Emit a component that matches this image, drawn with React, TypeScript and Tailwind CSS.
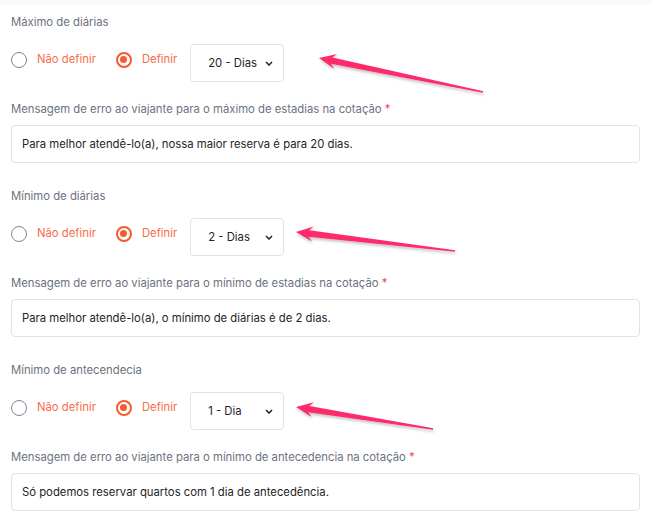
const sections = [
  {
    title: "Máximo de diárias",
    value: "20 - Dias",
    label: "Mensagem de erro ao viajante para o máximo de estadias na cotação",
    message: "Para melhor atendê-lo(a), nossa maior reserva é para 20 dias.",
  },
  {
    title: "Mínimo de diárias",
    value: "2 - Dias",
    label: "Mensagem de erro ao viajante para o mínimo de estadias na cotação",
    message: "Para melhor atendê-lo(a), o mínimo de diárias é de 2 dias.",
  },
  {
    title: "Mínimo de antecendecia",
    value: "1 - Dia",
    label: "Mensagem de erro ao viajante para o mínimo de antecedencia na cotação",
    message: "Só podemos reservar quartos com 1 dia de antecedência.",
  },
];

const arrows = [
  { tip: [319, 58], tail: [483, 92] },
  { tip: [296, 232], tail: [455, 251] },
  { tip: [296, 407], tail: [433, 429] },
];

function arrowPoints(tip: number[], tail: number[]) {
  const dx = tail[0] - tip[0];
  const dy = tail[1] - tip[1];
  const len = Math.hypot(dx, dy);
  const d = [dx / len, dy / len];
  const n = [-d[1], d[0]];
  const at = (t: number, w: number) =>
    `${tip[0] + d[0] * t + n[0] * w},${tip[1] + d[1] * t + n[1] * w}`;
  return [
    at(0, 0),
    at(17, 7.5),
    at(13, 3.2),
    at(len, 0.8),
    at(len, -0.8),
    at(13, -3.2),
    at(17, -7.5),
  ].join(" ");
}

function Radio({ checked, label }: { checked?: boolean; label: string }) {
  return (
    <div className="flex items-center gap-[10px]">
      {checked ? (
        <span className="w-4 h-4 rounded-full border-2 border-[#f75a2c] flex items-center justify-center">
          <span className="w-[7px] h-[7px] rounded-full bg-[#f75a2c]" />
        </span>
      ) : (
        <span className="w-4 h-4 rounded-full border-[1.5px] border-[#7d8794]" />
      )}
      <span className="text-[11.3px] text-[#f56d48]">{label}</span>
    </div>
  );
}

export default function App() {
  return (
    <div className="relative w-[653px] h-[525px] bg-white overflow-hidden font-['Inter',sans-serif]">
      <div className="h-[5px] bg-[#fafafa]" />
      <div className="pl-[11px] pr-[13px] pt-[7px] flex flex-col gap-[23px]">
        {sections.map((s) => (
          <div key={s.title} className="flex flex-col">
            <div className="h-5 leading-5 text-[11.3px] text-[#6b7280]">{s.title}</div>
            <div className="mt-[12px] flex items-center">
              <div className="mb-[7px] flex items-center">
                <Radio label="Não definir" />
                <div className="ml-[20px]">
                  <Radio checked label="Definir" />
                </div>
              </div>
              <div className="ml-[13px] w-[94px] h-[38px] border border-[#dfe3e8] rounded-[4px] flex items-center justify-between pl-[17px] pr-[10px] text-[11.3px] text-[#1f2328]">
                <span>{s.value}</span>
                <svg width="8" height="5" viewBox="0 0 8 5" fill="none">
                  <path d="M1 1l3 3 3-3" stroke="#222" strokeWidth="1.5" />
                </svg>
              </div>
            </div>
            <div className="mt-[17px] h-5 leading-5 text-[11.3px] text-[#6b7280]">
              {s.label} <span className="text-[#e8455f]">*</span>
            </div>
            <div className="mt-[6px] h-[38px] border border-[#dfe3e8] rounded-[4px] flex items-center px-[10px] text-[11.3px] text-[#1f2328]">
              {s.message}
            </div>
          </div>
        ))}
      </div>
      <svg className="absolute inset-0 pointer-events-none" width="653" height="525">
        <defs>
          <filter id="sh" x="-10%" y="-50%" width="120%" height="200%">
            <feDropShadow dx="1" dy="2" stdDeviation="1.5" floodColor="#000" floodOpacity="0.25" />
          </filter>
        </defs>
        {arrows.map((a, i) => (
          <polygon key={i} points={arrowPoints(a.tip, a.tail)} fill="#fd2c6c" filter="url(#sh)" />
        ))}
      </svg>
    </div>
  );
}
